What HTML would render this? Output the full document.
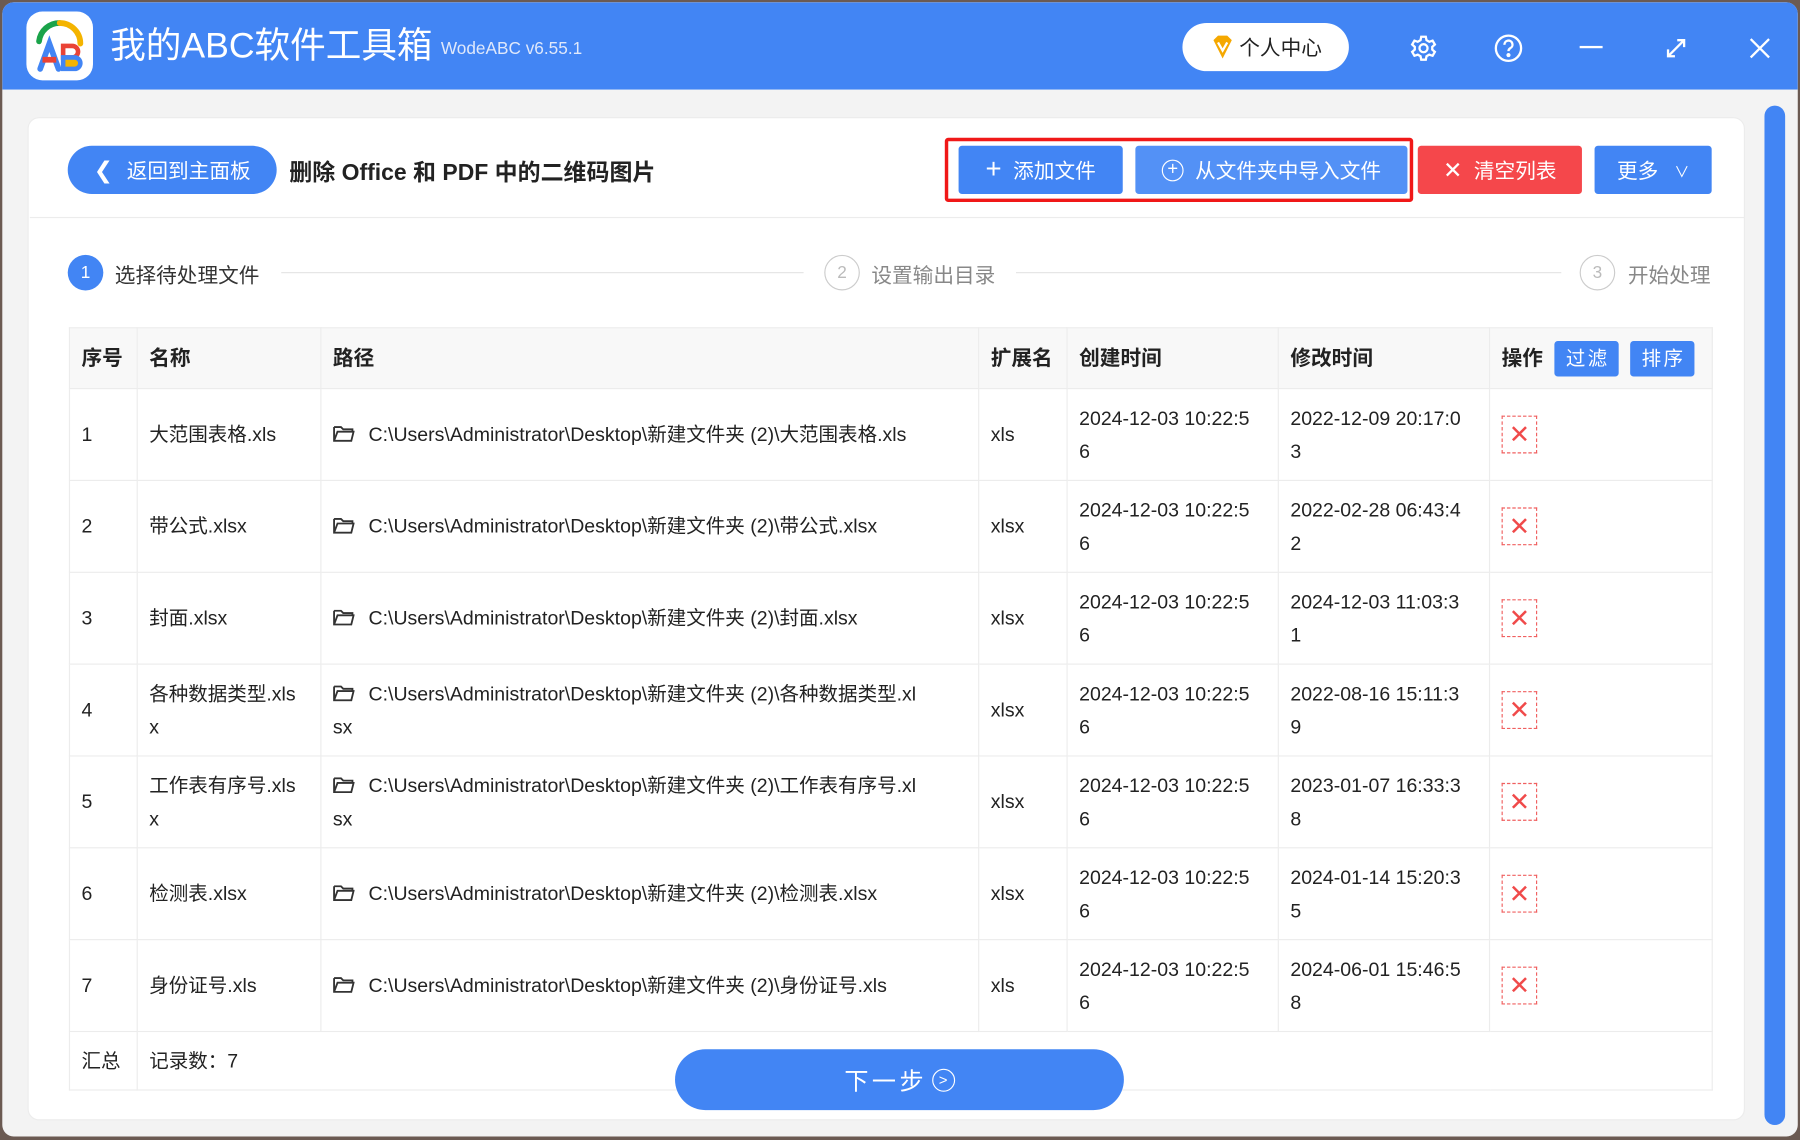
<!DOCTYPE html>
<html><head><meta charset="utf-8"><style>
*{box-sizing:border-box;margin:0;padding:0}
html,body{width:1800px;height:1140px;overflow:hidden;background:#6b5a52}
#s{position:absolute;left:0;top:0;width:1568px;height:993px;transform:scale(1.148);transform-origin:0 0;font-family:"Liberation Sans","Noto Sans CJK SC",sans-serif;color:#222}
.win{position:absolute;left:2px;top:2px;width:1564px;height:988px;background:#f3f3f3;border-radius:10px;overflow:hidden}
.tb{position:absolute;left:0;top:0;width:100%;height:76px;background:#4285f4}
.abs{position:absolute}
.card{position:absolute;left:24px;top:102px;width:1496px;height:874px;background:#fff;border-radius:10px;border:1px solid #ececec}
.btn{position:absolute;top:127px;height:42px;color:#fff;font-size:18px;display:flex;align-items:center;justify-content:center;border-radius:3px}
table{position:absolute;left:60px;top:285px;border-collapse:collapse;font-size:17px;color:#222;table-layout:fixed;width:1431px}
td,th{border:1px solid #ececec;padding:0 10px;text-align:left;vertical-align:middle;white-space:nowrap;line-height:29px;overflow:visible}
th{background:#f8f8f8;height:53px;font-weight:bold;font-size:18px}
tr.r td{height:80px}
.del{display:inline-block;width:31px;height:33px;border:1px dashed #f06060;color:#f04a4a;text-align:center;line-height:31px;font-size:22px}
.fold{display:inline-block;width:19px;height:14px;margin-right:12px;vertical-align:-1px}
.sb{display:inline-block;background:#4285f4;color:#fff;padding:0 8px 0 10px;height:31px;line-height:31px;border-radius:3px;font-size:17px;font-weight:normal;margin-left:10px;letter-spacing:2px}
.circ{position:absolute;width:31px;height:31px;border-radius:50%;text-align:center;line-height:29px;font-size:15px}
</style></head><body><div id="s">
<div class="win">
 <div class="tb">
  <div class="abs" style="left:21px;top:8px;width:58px;height:60px;background:#fff;border-radius:14px">
   <svg width="58" height="60" viewBox="0 0 58 60"><path d="M11 26 A18 18 0 0 1 29 10" stroke="#1aa34a" stroke-width="5" fill="none" stroke-linecap="round"/><path d="M29 10 A18 18 0 0 1 47 28" stroke="#f4b400" stroke-width="5" fill="none" stroke-linecap="round"/><path d="M12 50 L20 28 L28 50" stroke="#4285f4" stroke-width="5" fill="none" stroke-linecap="round"/><path d="M14 42 H26" stroke="#ea4335" stroke-width="5"/><path d="M32 30 H40 A5 5 0 0 1 40 40 H32 Z" stroke="#ea4335" stroke-width="4" fill="none"/><path d="M32 40 H42 A5 5 0 0 1 42 50 H32 Z" stroke="#4285f4" stroke-width="4" fill="#f4b400"/></svg>
  </div>
  <div class="abs" style="left:94px;top:18px;color:#fff;font-size:31px;line-height:40px">我的ABC软件工具箱</div>
  <div class="abs" style="left:382px;top:32px;color:#dfe8fb;font-size:15px">WodeABC v6.55.1</div>
  <div class="abs" style="left:1028px;top:18px;width:145px;height:42px;background:#fff;border-radius:21px;font-size:18px;color:#222;display:flex;align-items:center;justify-content:center;gap:4px"><svg width="22" height="22" viewBox="0 0 22 22"><path d="M3 5 L7 1 H15 L19 5 L11 21 Z" fill="#f5a800"/><path d="M7 7 L11 14 L15 7" stroke="#fff" stroke-width="2" fill="none"/></svg>个人中心</div>
  <svg class="abs" style="left:1226px;top:28px" width="24" height="24" viewBox="0 0 24 24" fill="none" stroke="#fff" stroke-width="2"><circle cx="12" cy="12" r="3.5"/><path d="M10 2h4l.6 3 2.4 1.4 2.9-1 2 3.4-2.3 2v2.4l2.3 2-2 3.4-2.9-1L14.6 19 14 22h-4l-.6-3-2.4-1.4-2.9 1-2-3.4 2.3-2v-2.4l-2.3-2 2-3.4 2.9 1L9.4 5z"/></svg>
  <svg class="abs" style="left:1299px;top:27px" width="26" height="26" viewBox="0 0 26 26" fill="none" stroke="#fff" stroke-width="2"><circle cx="13" cy="13" r="11"/><path d="M9.5 10a3.5 3.5 0 1 1 5 3c-1 .6-1.5 1.2-1.5 2.5"/><circle cx="13" cy="19" r=".8" fill="#fff"/></svg>
  <div class="abs" style="left:1374px;top:38px;width:20px;height:2px;background:#fff"></div>
  <svg class="abs" style="left:1447px;top:29px" width="22" height="22" viewBox="0 0 22 22" fill="none" stroke="#fff" stroke-width="2"><path d="M4 18 L18 4 M12 4h6v6 M4 12v6h6" stroke-width="2"/></svg>
  <svg class="abs" style="left:1520px;top:29px" width="22" height="22" viewBox="0 0 22 22" stroke="#fff" stroke-width="2"><path d="M3 3 L19 19 M19 3 L3 19"/></svg>
 </div>
 <div class="abs" style="left:1535px;top:90px;width:18px;height:888px;background:#4285f4;border-radius:9px"></div>
</div>
<div class="card"></div>
<div class="abs" style="left:26px;top:189px;width:1494px;height:1px;background:#ececec"></div>
<div class="btn" style="left:59px;width:182px;border-radius:21px;background:#4285f4"><span style="margin-right:12px;font-size:20px">&#10094;</span>返回到主面板</div>
<div class="abs" style="left:252px;top:134px;font-size:20px;font-weight:bold;color:#222">删除 Office 和 PDF 中的二维码图片</div>
<div class="abs" style="left:823px;top:120px;width:408px;height:56px;border:3px solid #f01818;border-radius:3px"></div>
<div class="btn" style="left:835px;width:143px;background:#4285f4"><span style="font-size:24px;margin-right:10px;font-weight:300">+</span>添加文件</div>
<div class="btn" style="left:989px;width:237px;background:#5391f6"><span style="display:inline-block;width:19px;height:19px;border:1.5px solid #fff;border-radius:50%;font-size:16px;line-height:15px;text-align:center;margin-right:10px">+</span>从文件夹中导入文件</div>
<div class="btn" style="left:1235px;width:143px;background:#f5474b"><span style="font-size:20px;margin-right:10px">✕</span>清空列表</div>
<div class="btn" style="left:1389px;width:102px;background:#4285f4">更多<span style="font-size:13px;margin-left:14px">&#8744;</span></div>
<div class="circ" style="left:59px;top:222px;background:#4285f4;color:#fff;line-height:31px">1</div>
<div class="abs" style="left:100px;top:226px;font-size:18px;color:#333">选择待处理文件</div>
<div class="abs" style="left:245px;top:237px;width:455px;height:1px;background:#e4e4e4"></div>
<div class="circ" style="left:718px;top:222px;border:1px solid #ccc;color:#bbb">2</div>
<div class="abs" style="left:759px;top:226px;font-size:18px;color:#888">设置输出目录</div>
<div class="abs" style="left:885px;top:237px;width:475px;height:1px;background:#e4e4e4"></div>
<div class="circ" style="left:1376px;top:222px;border:1px solid #ccc;color:#bbb">3</div>
<div class="abs" style="left:1418px;top:226px;font-size:18px;color:#888">开始处理</div>
<table>
<colgroup><col style="width:59px"><col style="width:160px"><col style="width:573px"><col style="width:77px"><col style="width:184px"><col style="width:184px"><col style="width:194px"></colgroup>
<tr><th>序号</th><th>名称</th><th>路径</th><th>扩展名</th><th>创建时间</th><th>修改时间</th><th>操作<span class="sb">过滤</span><span class="sb">排序</span></th></tr>
<tr class="r"><td>1</td><td>大范围表格.xls</td><td><svg class="fold" viewBox="0 0 19 14"><path d="M1 1h6l2 2h8v2M1 1v12h15l2-8H4l-3 8" fill="none" stroke="#333" stroke-width="1.6"/></svg>C:\Users\Administrator\Desktop\新建文件夹 (2)\大范围表格.xls</td><td>xls</td><td>2024-12-03 10:22:5<br>6</td><td>2022-12-09 20:17:0<br>3</td><td><span class="del">✕</span></td></tr>
<tr class="r"><td>2</td><td>带公式.xlsx</td><td><svg class="fold" viewBox="0 0 19 14"><path d="M1 1h6l2 2h8v2M1 1v12h15l2-8H4l-3 8" fill="none" stroke="#333" stroke-width="1.6"/></svg>C:\Users\Administrator\Desktop\新建文件夹 (2)\带公式.xlsx</td><td>xlsx</td><td>2024-12-03 10:22:5<br>6</td><td>2022-02-28 06:43:4<br>2</td><td><span class="del">✕</span></td></tr>
<tr class="r"><td>3</td><td>封面.xlsx</td><td><svg class="fold" viewBox="0 0 19 14"><path d="M1 1h6l2 2h8v2M1 1v12h15l2-8H4l-3 8" fill="none" stroke="#333" stroke-width="1.6"/></svg>C:\Users\Administrator\Desktop\新建文件夹 (2)\封面.xlsx</td><td>xlsx</td><td>2024-12-03 10:22:5<br>6</td><td>2024-12-03 11:03:3<br>1</td><td><span class="del">✕</span></td></tr>
<tr class="r"><td>4</td><td>各种数据类型.xls<br>x</td><td><svg class="fold" viewBox="0 0 19 14"><path d="M1 1h6l2 2h8v2M1 1v12h15l2-8H4l-3 8" fill="none" stroke="#333" stroke-width="1.6"/></svg>C:\Users\Administrator\Desktop\新建文件夹 (2)\各种数据类型.xl<br>sx</td><td>xlsx</td><td>2024-12-03 10:22:5<br>6</td><td>2022-08-16 15:11:3<br>9</td><td><span class="del">✕</span></td></tr>
<tr class="r"><td>5</td><td>工作表有序号.xls<br>x</td><td><svg class="fold" viewBox="0 0 19 14"><path d="M1 1h6l2 2h8v2M1 1v12h15l2-8H4l-3 8" fill="none" stroke="#333" stroke-width="1.6"/></svg>C:\Users\Administrator\Desktop\新建文件夹 (2)\工作表有序号.xl<br>sx</td><td>xlsx</td><td>2024-12-03 10:22:5<br>6</td><td>2023-01-07 16:33:3<br>8</td><td><span class="del">✕</span></td></tr>
<tr class="r"><td>6</td><td>检测表.xlsx</td><td><svg class="fold" viewBox="0 0 19 14"><path d="M1 1h6l2 2h8v2M1 1v12h15l2-8H4l-3 8" fill="none" stroke="#333" stroke-width="1.6"/></svg>C:\Users\Administrator\Desktop\新建文件夹 (2)\检测表.xlsx</td><td>xlsx</td><td>2024-12-03 10:22:5<br>6</td><td>2024-01-14 15:20:3<br>5</td><td><span class="del">✕</span></td></tr>
<tr class="r"><td>7</td><td>身份证号.xls</td><td><svg class="fold" viewBox="0 0 19 14"><path d="M1 1h6l2 2h8v2M1 1v12h15l2-8H4l-3 8" fill="none" stroke="#333" stroke-width="1.6"/></svg>C:\Users\Administrator\Desktop\新建文件夹 (2)\身份证号.xls</td><td>xls</td><td>2024-12-03 10:22:5<br>6</td><td>2024-06-01 15:46:5<br>8</td><td><span class="del">✕</span></td></tr>
<tr><td style="height:51px">汇总</td><td colspan="6" style="border-left:1px solid #ececec">记录数：7</td></tr>
</table>
<div class="abs" style="left:588px;top:914px;width:391px;height:53px;background:#4285f4;border-radius:27px;color:#fff;font-size:21px;display:flex;align-items:center;justify-content:center;letter-spacing:3px">下一步 <span style="display:inline-block;width:20px;height:20px;border:1.5px solid #fff;border-radius:50%;font-size:13px;line-height:17px;text-align:center;letter-spacing:0;margin-left:4px">&gt;</span></div>
</div></body></html>
